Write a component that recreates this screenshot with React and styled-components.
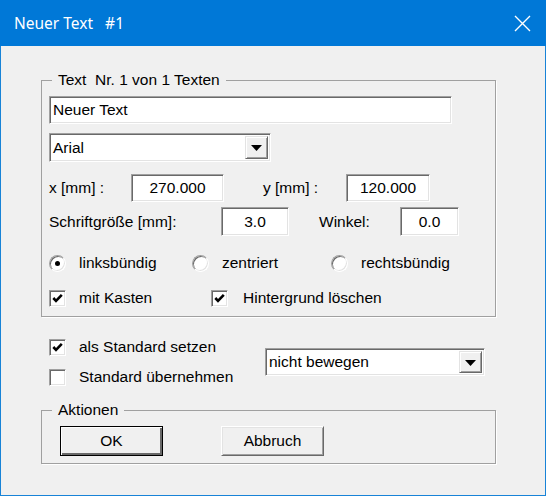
import React from 'react';
import styled, { createGlobalStyle } from 'styled-components';

const GlobalStyle = createGlobalStyle`
    html, body {
        margin: 0;
        padding: 0;
        background: #ffffff;
    }
    * {
        box-sizing: border-box;
    }
`

const App = () => {
    return (
        <>
            <GlobalStyle />
            <Window>
                <TitleBar>
                    <Title>Neuer Text   #1</Title>
                    <CloseIcon width="17" height="17" viewBox="0 0 17 17">
                        <path d="M1 1 L16 16 M16 1 L1 16" stroke="#fff" strokeWidth="1.4" fill="none" />
                    </CloseIcon>
                </TitleBar>
                <Client>
                    <Group>
                        <Legend>Text  Nr. 1 von 1 Texten</Legend>
                        <Field w={403} h={28}>Neuer Text</Field>
                        <Combo w={222} h={29} mt={9}>
                            <ComboText>Arial</ComboText>
                            <DropButton><Arrow /></DropButton>
                        </Combo>
                        <Row mt={12} h={28}>
                            <Label w={82}>x [mm] :</Label>
                            <Field w={93} h={28} center>270.000</Field>
                            <Label w={83} ml={39}>y [mm] :</Label>
                            <Field w={84} h={28} center>120.000</Field>
                        </Row>
                        <Row mt={5} h={29}>
                            <Label w={172}>Schriftgröße [mm]:</Label>
                            <Field w={68} h={29} center>3.0</Field>
                            <Label w={81} ml={30}>Winkel:</Label>
                            <Field w={59} h={29} center>0.0</Field>
                        </Row>
                        <Row mt={17} h={20}>
                            <Option w={143}>
                                <Radio checked />
                                <OptionText>linksbündig</OptionText>
                            </Option>
                            <Option w={139}>
                                <Radio />
                                <OptionText>zentriert</OptionText>
                            </Option>
                            <Option>
                                <Radio />
                                <OptionText>rechtsbündig</OptionText>
                            </Option>
                        </Row>
                        <Row mt={15} h={20}>
                            <Option w={162}>
                                <CheckBox checked />
                                <OptionText>mit Kasten</OptionText>
                            </Option>
                            <Option>
                                <CheckBox checked />
                                <OptionText gap={15}>Hintergrund löschen</OptionText>
                            </Option>
                        </Row>
                    </Group>

                    <Defaults>
                        <CheckColumn>
                            <Option>
                                <CheckBox checked />
                                <OptionText>als Standard setzen</OptionText>
                            </Option>
                            <Option>
                                <CheckBox />
                                <OptionText>Standard übernehmen</OptionText>
                            </Option>
                        </CheckColumn>
                        <Combo w={220} h={28}>
                            <ComboText>nicht bewegen</ComboText>
                            <DropButton><Arrow /></DropButton>
                        </Combo>
                    </Defaults>

                    <Group actions>
                        <Legend>Aktionen</Legend>
                        <Buttons>
                            <Button isDefault>OK</Button>
                            <Button>Abbruch</Button>
                        </Buttons>
                    </Group>
                </Client>
            </Window>
        </>
    )
}

const Radio = ({ checked }) => (
    <RadioCircle>{checked && <RadioDot />}</RadioCircle>
)

const CheckBox = ({ checked }) => (
    <CheckSquare>
        {checked && (
            <svg width="13" height="13" viewBox="0 0 13 13">
                <polyline points="2.3,6 5,8.8 10.8,2.8" stroke="#000" strokeWidth="2.6" fill="none" />
            </svg>
        )}
    </CheckSquare>
)

const Arrow = () => (
    <svg width="11" height="6" viewBox="0 0 11 6">
        <polygon points="0,0 11,0 5.5,6" fill="#000" />
    </svg>
)

const Window = styled.div`
    width: 546px;
    height: 496px;
    display: flex;
    flex-direction: column;
    border: 1px solid #1883d7;
    border-top: none;
    background: #f0f0f0;
    font-family: "Liberation Sans", Arial, sans-serif;
    font-size: 15.5px;
    color: #000;
`

const TitleBar = styled.div`
    height: 46px;
    margin: 0 -1px;
    flex-shrink: 0;
    display: flex;
    align-items: center;
    justify-content: space-between;
    padding: 0 15px 0 14px;
    background: #0078d7;
`

const Title = styled.div`
    font-family: "Noto Sans", "Open Sans", sans-serif;
    font-size: 15.5px;
    color: #fff;
    white-space: pre;
    padding-bottom: 1px;
`

const CloseIcon = styled.svg`
    display: block;
    margin-top: 1px;
`

const Client = styled.div`
    flex: 1;
    padding: 25px 49px 0 40px;
    display: flex;
    flex-direction: column;
`

const Group = styled.fieldset`
    margin: ${(props) => (props.actions ? '14px 0 0 0' : '0')};
    padding: ${(props) => (props.actions ? '7px 0 7px 7px' : '7px 0 8px 7px')};
    border: 1px solid #a0a0a0;
    box-shadow: 1px 1px 0 #fff;
    display: flex;
    flex-direction: column;
    align-items: flex-start;
    min-width: 0;
`

const Legend = styled.legend`
    padding: 0 6px;
    margin-left: 3px;
    line-height: 18px;
    white-space: pre;
`

const Field = styled.div`
    width: ${(props) => props.w}px;
    height: ${(props) => props.h}px;
    flex-shrink: 0;
    display: flex;
    align-items: center;
    justify-content: ${(props) => (props.center ? 'center' : 'flex-start')};
    padding: 0 3px;
    background: #fff;
    border: 1px solid;
    border-color: #a0a0a0 #fff #fff #a0a0a0;
    box-shadow: inset 1px 1px 0 #696969, inset -1px -1px 0 #e3e3e3;
    white-space: pre;
`

const Combo = styled.div`
    width: ${(props) => props.w}px;
    height: ${(props) => props.h}px;
    margin-top: ${(props) => props.mt || 0}px;
    flex-shrink: 0;
    display: flex;
    align-items: stretch;
    padding: 2px;
    background: #fff;
    border: 1px solid;
    border-color: #a0a0a0 #fff #fff #a0a0a0;
    box-shadow: inset 1px 1px 0 #696969, inset -1px -1px 0 #e3e3e3;
`

const ComboText = styled.div`
    flex: 1;
    display: flex;
    align-items: center;
    padding-left: 1px;
`

const DropButton = styled.div`
    width: 23px;
    display: flex;
    align-items: center;
    justify-content: center;
    background: #f0f0f0;
    border: 1px solid;
    border-color: #e3e3e3 #696969 #696969 #e3e3e3;
    box-shadow: inset 1px 1px 0 #fff, inset -1px -1px 0 #a0a0a0;
    padding-top: 1px;
`

const Row = styled.div`
    display: flex;
    align-items: center;
    height: ${(props) => props.h}px;
    margin-top: ${(props) => props.mt || 0}px;
`

const Label = styled.div`
    width: ${(props) => props.w}px;
    margin-left: ${(props) => props.ml || 0}px;
    flex-shrink: 0;
    white-space: pre;
`

const Option = styled.div`
    display: flex;
    align-items: center;
    height: 20px;
    width: ${(props) => (props.w ? `${props.w}px` : 'auto')};
    flex-shrink: 0;
`

const OptionText = styled.span`
    margin-left: ${(props) => props.gap || 13}px;
    white-space: pre;
`

const RadioCircle = styled.span`
    width: 17px;
    height: 17px;
    flex-shrink: 0;
    display: flex;
    align-items: center;
    justify-content: center;
    border-radius: 50%;
    background: #fff;
    border: 1px solid;
    border-color: #a0a0a0 #fff #fff #a0a0a0;
    box-shadow: inset 1px 1px 0 #696969, inset -1px -1px 0 #e3e3e3;
`

const RadioDot = styled.span`
    width: 5px;
    height: 5px;
    border-radius: 50%;
    background: #000;
`

const CheckSquare = styled.span`
    width: 17px;
    height: 17px;
    flex-shrink: 0;
    display: flex;
    align-items: center;
    justify-content: center;
    background: #fff;
    border: 1px solid;
    border-color: #a0a0a0 #fff #fff #a0a0a0;
    box-shadow: inset 1px 1px 0 #696969, inset -1px -1px 0 #e3e3e3;
`

const Defaults = styled.div`
    margin-top: 20px;
    padding-left: 8px;
    display: flex;
    align-items: center;
`

const CheckColumn = styled.div`
    width: 216px;
    display: flex;
    flex-direction: column;
    gap: 10px;
`

const Buttons = styled.div`
    display: flex;
    gap: 58px;
    padding-left: 11px;
`

const Button = styled.div`
    width: 103px;
    height: 30px;
    display: flex;
    align-items: center;
    justify-content: center;
    background: #f0f0f0;
    border: 1px solid;
    border-color: ${(props) => (props.isDefault ? '#000' : '#fff #696969 #696969 #fff')};
    box-shadow: ${(props) =>
        props.isDefault
            ? 'inset 1px 1px 0 #fff, inset -2px -2px 0 #696969'
            : 'inset 1px 1px 0 #e3e3e3, inset -1px -1px 0 #a0a0a0'};
    padding-bottom: 1px;
`

export default App;
